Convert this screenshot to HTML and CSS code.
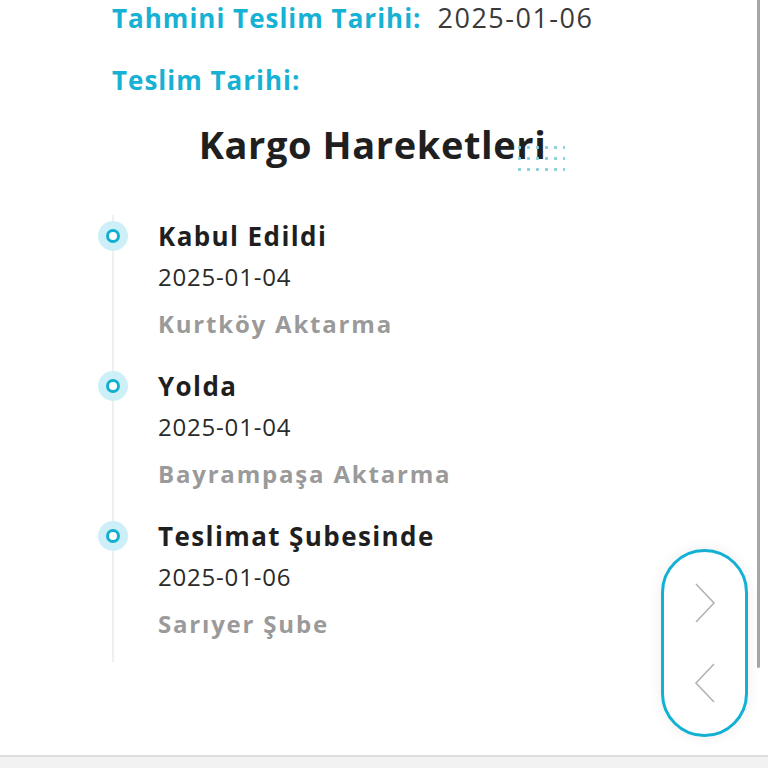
FILE: index.html
```html
<!DOCTYPE html>
<html lang="tr">
<head>
<meta charset="utf-8">
<title>Kargo Takip</title>
<link rel="stylesheet" href="styles.css">
</head>
<body>
<div class="page">
  <main class="main">
    <section class="content">
      <div class="info-row">
        <span class="label">Tahmini Teslim Tarihi:</span>
        <span class="value">2025-01-06</span>
      </div>
      <div class="info-row second">
        <span class="label">Teslim Tarihi:</span>
      </div>
      <div class="title-wrap">
        <h2 class="section-title">Kargo Hareketleri<span class="dots"></span></h2>
      </div>
      <ul class="timeline">
        <li class="event">
          <span class="marker"></span>
          <div class="event-title">Kabul Edildi</div>
          <div class="event-date">2025-01-04</div>
          <div class="event-place">Kurtköy Aktarma</div>
        </li>
        <li class="event">
          <span class="marker"></span>
          <div class="event-title">Yolda</div>
          <div class="event-date">2025-01-04</div>
          <div class="event-place">Bayrampaşa Aktarma</div>
        </li>
        <li class="event">
          <span class="marker"></span>
          <div class="event-title">Teslimat Şubesinde</div>
          <div class="event-date">2025-01-06</div>
          <div class="event-place">Sarıyer Şube</div>
        </li>
      </ul>
    </section>
    <div class="scroll-track"><div class="scroll-thumb"></div></div>
    <div class="nav-pill">
      <button class="nav-btn" aria-label="İleri">
        <svg width="24" height="42" viewBox="0 0 24 42"><path d="M3 2 L21 21 L3 40" fill="none" stroke="#b3b3b3" stroke-width="1.6"/></svg>
      </button>
      <button class="nav-btn" aria-label="Geri">
        <svg width="24" height="42" viewBox="0 0 24 42"><path d="M21 2 L3 21 L21 40" fill="none" stroke="#b3b3b3" stroke-width="1.6"/></svg>
      </button>
    </div>
  </main>
  <div class="bottom-bar"></div>
</div>
</body>
</html>
```
FILE: styles.css
```css
html, body {
  margin: 0;
  padding: 0;
  background: #ffffff;
}
body {
  font-family: "Open Sans", "Noto Sans", sans-serif;
  color: #222;
}
.page {
  width: 768px;
  height: 768px;
  display: flex;
  flex-direction: column;
  overflow: hidden;
}
.main {
  position: relative;
  height: 757px;
  display: flex;
}
.content {
  flex: 1;
  padding-left: 112px;
  padding-top: 0;
}
.info-row {
  display: flex;
  align-items: baseline;
  gap: 16px;
  height: 36px;
  line-height: 36px;
}
.info-row.second {
  margin-top: 26px;
}
.label {
  color: #17b1d4;
  font-weight: 700;
  font-size: 26px;
  letter-spacing: 1px;
}
.value {
  color: #3a3a3a;
  font-weight: 400;
  font-size: 27px;
  letter-spacing: 1.5px;
}
.title-wrap {
  margin-left: -112px;
  text-align: center;
  padding-right: 12px;
  margin-top: 22px;
}
.section-title {
  position: relative;
  display: inline-block;
  margin: 0;
  font-size: 38px;
  line-height: 48px;
  font-weight: 700;
  letter-spacing: 0.6px;
  color: #1f1f1f;
}
.dots {
  position: absolute;
  right: -19px;
  top: 22px;
  width: 50px;
  height: 33px;
  background-image: radial-gradient(circle, #86cfdc 1.3px, transparent 1.9px);
  background-size: 9px 11px;
}
.timeline {
  list-style: none;
  margin: 47px 0 0 0;
  padding: 1px 0 0 44px;
  border-left: 2px solid #efefef;
  width: 420px;
}
.event {
  position: relative;
  height: 150px;
}
.event:last-child {
  height: 146px;
}
.marker {
  position: absolute;
  left: -60px;
  top: 5px;
  width: 30px;
  height: 30px;
  border-radius: 50%;
  background: #cdeff7;
}
.marker::after {
  content: "";
  position: absolute;
  left: 8px;
  top: 8px;
  width: 8px;
  height: 8px;
  border: 3px solid #13afd0;
  border-radius: 50%;
  background: #fff;
}
.event-title {
  font-size: 26px;
  font-weight: 700;
  line-height: 40px;
  letter-spacing: 1.4px;
  color: #1f1f1f;
}
.event-date {
  font-size: 24px;
  line-height: 42px;
  letter-spacing: 0.8px;
  color: #2a2a2a;
}
.event-place {
  font-size: 24px;
  font-weight: 700;
  line-height: 52px;
  letter-spacing: 1.8px;
  color: #9a9a9a;
}
.scroll-track {
  width: 11px;
  position: relative;
}
.scroll-thumb {
  position: absolute;
  left: 0;
  top: 0;
  width: 3px;
  height: 668px;
  border-radius: 0 0 2px 2px;
  background: #a6a6a6;
}
.nav-pill {
  position: absolute;
  left: 661px;
  top: 549px;
  width: 81px;
  height: 182px;
  border: 3px solid #12b0d2;
  border-radius: 44px;
  background: #fff;
  box-shadow: 0 0 14px rgba(0,0,0,0.08);
  display: flex;
  flex-direction: column;
  align-items: center;
  justify-content: center;
  gap: 38px;
}
.nav-btn {
  border: 0;
  background: transparent;
  padding: 0;
  margin: 0;
  width: 24px;
  height: 42px;
  display: block;
}
.nav-btn svg {
  display: block;
}
.bottom-bar {
  height: 11px;
  border-top: 2px solid #dddddd;
  background: #f2f2f2;
}
```
